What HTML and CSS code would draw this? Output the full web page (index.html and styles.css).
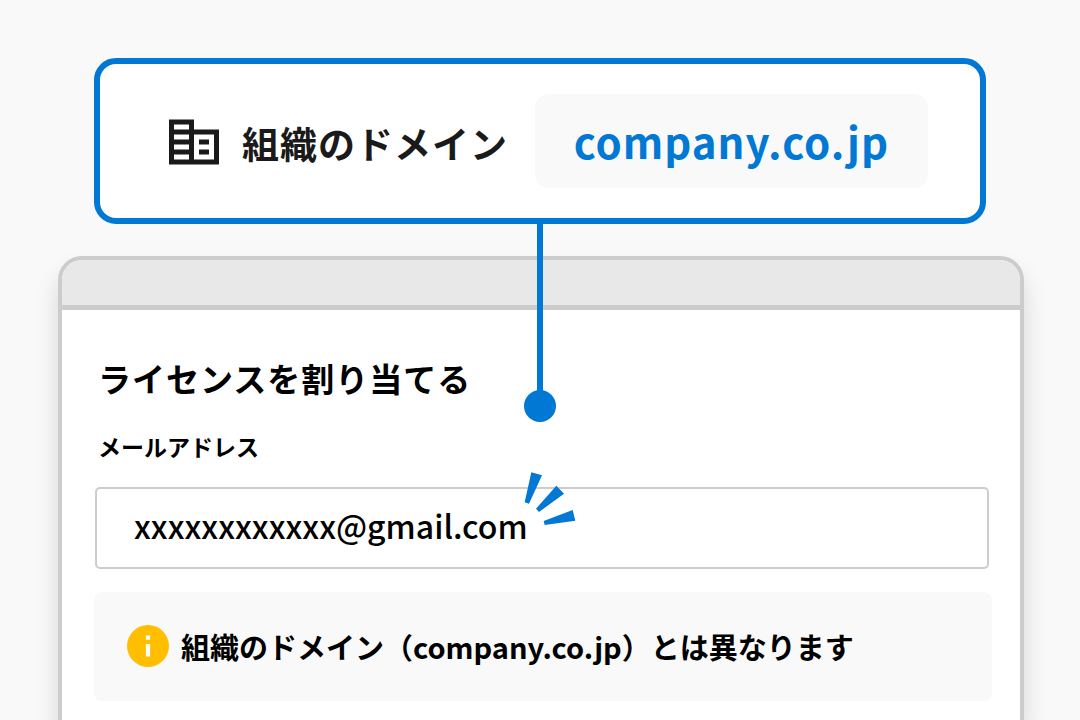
FILE: index.html
```html
<!DOCTYPE html>
<html lang="ja">
<head>
    <meta charset="UTF-8">
    <meta name="viewport" content="width=device-width, initial-scale=1.0">
    <title>ライセンスを割り当てる</title>
    <link rel="stylesheet" href="styles.css">
</head>
<body>
    <main class="page">
        <section class="callout">
            <svg class="callout-icon" viewBox="0 0 24 24" aria-hidden="true">
                <path d="M12 7V3H2v18h20V7H12zM10 19H4v-2h6v2zm0-4H4v-2h6v2zm0-4H4V9h6v2zm0-4H4V5h6v2zm10 12h-8V9h8v10zm-2-8h-4v2h4v-2zm0 4h-4v2h4v-2z"/>
            </svg>
            <h2 class="callout-title">組織のドメイン</h2>
            <div class="domain">company.co.jp</div>
            <!-- line from the callout down to the e-mail field -->
            <div class="connector"></div>
        </section>

        <section class="window">
            <div class="window-bar"></div>
            <div class="window-body">
                <form class="license-form">
                    <h1>ライセンスを割り当てる</h1>
                    <label for="email">メールアドレス</label>
                    <div class="field">
                        <input id="email" type="text" value="xxxxxxxxxxxx@gmail.com">
                        <svg class="spark" viewBox="0 0 156 162" aria-hidden="true">
                            <path d="M22 1L54 10L15 95L2 91ZM97 41L120 65L45 120L36 110ZM146 114L154 146L62 159L59 147Z"/>
                        </svg>
                    </div>
                </form>
                <div class="notice" role="status">
                    <svg class="notice-icon" viewBox="2 2 20 20" aria-hidden="true">
                        <circle cx="12" cy="12" r="10"/>
                        <path d="M11 7h2v2h-2zM11 11h2v6h-2z"/>
                    </svg>
                    <p>組織のドメイン（company.co.jp）とは異なります</p>
                </div>
            </div>
        </section>
    </main>
</body>
</html>
```
FILE: styles.css
```css
* {
    box-sizing: border-box;
}

body, html {
    margin: 0;
    padding: 0;
    height: 100%;
    font-family: "Noto Sans CJK JP", sans-serif;
    background-color: #f9f9f9;
    color: #000;
}

h1, h2, p {
    margin: 0;
}

.page {
    min-height: 100%;
    display: flex;
    flex-direction: column;
    gap: 32px;
    padding: 58px 56px 0 58px;
    overflow: hidden;
}

/* Callout */
.callout {
    position: relative;
    display: flex;
    align-items: center;
    margin: 0 38px 0 36px;
    padding: 30px 52px 30px 64px;
    border: 6px solid #0078d4;
    border-radius: 22px;
    background-color: #fff;
}

.callout-icon {
    flex: none;
    width: 60px;
    height: 60px;
    margin-top: 2px;
    fill: #1a1a1a;
}

.callout-title {
    margin-left: 18px;
    padding-top: 4px;
    font-size: 37px;
    line-height: 56px;
    font-weight: 700;
    letter-spacing: 1px;
    color: #1a1a1a;
    white-space: nowrap;
}

.domain {
    margin-left: auto;
    padding: 19px 39px;
    border-radius: 14px;
    background-color: #f9f9f9;
    color: #0078d4;
    font-size: 42px;
    line-height: 56px;
    font-weight: 700;
    letter-spacing: 1px;
}

.connector {
    position: absolute;
    top: 100%;
    left: 50%;
    z-index: 1;
    width: 6px;
    height: 194px;
    margin-left: -3px;
    background-color: #0078d4;
}

.connector::after {
    content: "";
    position: absolute;
    bottom: -10px;
    left: -13px;
    width: 32px;
    height: 32px;
    border-radius: 50%;
    background-color: #0078d4;
}

/* Window */
.window {
    flex: 1;
    border: 4px solid #ccc;
    border-bottom: none;
    border-radius: 24px 24px 0 0;
    background-color: #fff;
    box-shadow: 0 16px 24px rgba(0, 0, 0, 0.14);
}

.window-bar {
    height: 50px;
    border-bottom: 5px solid #ccc;
    border-radius: 20px 20px 0 0;
    background-color: #e8e8e8;
}

.window-body {
    padding: 40px 28px 20px 32px;
}

.license-form {
    margin: 0 3px 23px 1px;
}

h1 {
    padding-left: 3px;
    font-size: 33px;
    line-height: 56px;
    letter-spacing: 1px;
}

label {
    display: block;
    margin: 21px 0 22px;
    padding-left: 3px;
    font-size: 23px;
    line-height: 38px;
    font-weight: 700;
}

.field {
    position: relative;
}

.field input {
    display: block;
    width: 100%;
    height: 82px;
    padding: 0 37px 6px;
    border: 2px solid #ccc;
    border-radius: 5px;
    background-color: #fff;
    color: #000;
    font-family: inherit;
    font-size: 32px;
    font-weight: 500;
}

.spark {
    position: absolute;
    top: -15px;
    left: 429px;
    width: 52px;
    height: 54px;
    fill: #0078d4;
}

.notice {
    display: flex;
    align-items: center;
    gap: 12px;
    padding: 32px 33px 33px;
    border-radius: 8px;
    background-color: #f9f9f9;
}

.notice p {
    font-size: 29px;
    line-height: 44px;
    font-weight: 700;
}

.notice-icon {
    flex: none;
    width: 42px;
    height: 42px;
}

.notice-icon circle {
    fill: #ffbf00;
}

.notice-icon path {
    fill: #fff;
}
```
